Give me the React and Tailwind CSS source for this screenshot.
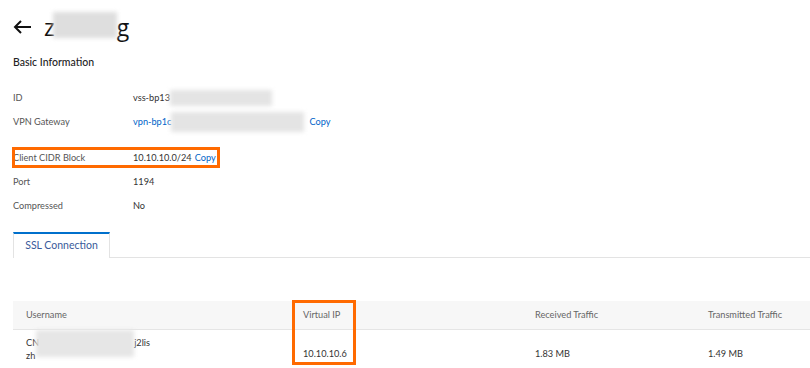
import React from "react";

function Blur({ className }) {
  return <span className={"inline-block bg-[#e4e4e4] blur-[2px] " + className} />;
}

function Row({ label, children, className = "" }) {
  return (
    <div className={"flex h-6 items-center " + className}>
      <div className="w-[120px] text-[#555]">{label}</div>
      <div className="flex items-center text-[#333]">{children}</div>
    </div>
  );
}

export default function App() {
  return (
    <div
      className="relative h-[368px] w-[810px] overflow-hidden bg-white text-[9.2px]"
      style={{ fontFamily: 'Lato, "Open Sans", sans-serif' }}
    >
      <div className="pl-[13px]">
        {/* Title */}
        <div className="flex h-[40px] items-center pt-[14px]">
          <svg width="19" height="14" viewBox="0 0 19 14" className="mr-[12px]">
            <path d="M18 7H2M8 1L2 7l6 6" fill="none" stroke="#111" strokeWidth="2" />
          </svg>
          <div
            className="relative flex items-center text-[23px] leading-none text-[#111]"
            style={{ fontFamily: '"Open Sans", sans-serif' }}
          >
            <span>z</span>
            <span className="w-[62px]" />
            <span>g</span>
            <span className="absolute left-[9px] top-[-4px] h-[26px] w-[64px] bg-[#dedede] blur-[2px]" />
          </div>
        </div>

        <div className="mt-[15px] text-[10.5px] font-medium text-[#222]">Basic Information</div>

        <div className="mt-[15px]">
          <Row label="ID">
            <span>vss-bp13</span>
            <Blur className="h-[16px] w-[102px]" />
          </Row>
          <Row label="VPN Gateway">
            <span className="text-[#0064c8]">vpn-bp1c</span>
            <Blur className="h-[20px] w-[133px]" />
            <span className="ml-[5px] text-[#0064c8]">Copy</span>
          </Row>
          <div className="relative mt-[12px]">
            <Row label="Client CIDR Block">
              <span>10.10.10.0/24</span>
              <span className="ml-[3px] text-[#0064c8]">Copy</span>
            </Row>
            <div className="absolute left-[-1px] top-[1px] h-[21px] w-[208px] border-[3px] border-[#ff6a00]" />
          </div>
          <Row label="Port">1194</Row>
          <Row label="Compressed">No</Row>
        </div>

        {/* Tabs */}
        <div className="mt-[14px] flex">
          <div className="flex h-[26px] w-[97px] items-center justify-center border-x border-t-2 border-x-[#e3e3e3] border-t-[#0070cc] text-[10.5px] text-[#3a5a9a]">
            SSL Connection
          </div>
          <div className="flex-1 border-b border-[#e3e3e3]" />
        </div>

        {/* Table */}
        <div className="mt-[43px]">
          <div className="flex h-[29px] items-center border-b border-[#e5e5e5] bg-[#f7f7f7] text-[#666]">
            <div className="w-[277px] pl-[13px]">Username</div>
            <div className="w-[232px] pl-[13px]">Virtual IP</div>
            <div className="w-[173px] pl-[13px]">Received Traffic</div>
            <div className="flex-1 pl-[13px]">Transmitted Traffic</div>
          </div>
          <div className="flex h-[39px] items-center text-[#333]">
            <div className="relative w-[277px] pl-[13px] leading-[13px]">
              <div>CN<span className="inline-block w-[95px]" />j2lis</div>
              <div>zh</div>
              <span className="absolute left-[23px] top-[-6px] h-[27px] w-[98px] bg-[#e6e6e6] blur-[2px]" />
            </div>
            <div className="w-[232px] pl-[13px] pt-[10px]">10.10.10.6</div>
            <div className="w-[173px] pl-[13px] pt-[10px]">1.83 MB</div>
            <div className="flex-1 pl-[13px] pt-[10px]">1.49 MB</div>
          </div>
        </div>
      </div>
      <div className="absolute left-[292px] top-[300px] h-[65px] w-[64px] border-[3px] border-[#ff6a00]" />
    </div>
  );
}
